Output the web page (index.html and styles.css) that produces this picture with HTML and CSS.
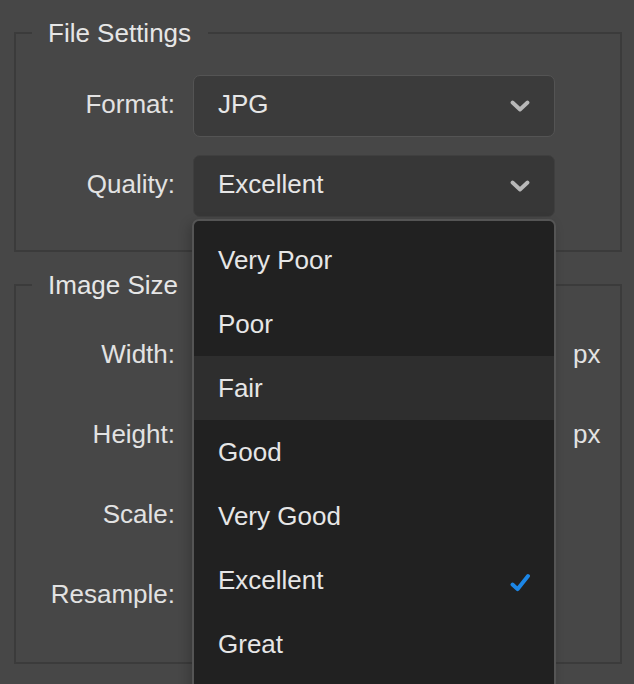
FILE: index.html
```html
<!DOCTYPE html>
<html>
<head>
<meta charset="utf-8">
<link rel="stylesheet" href="styles.css">
</head>
<body>
<div class="panel">
  <fieldset class="group">
    <legend class="legend">File Settings</legend>
    <div class="row">
      <span class="label">Format:</span>
      <div class="select">
        <span class="value">JPG</span>
        <svg class="chev" width="20" height="12" viewBox="0 0 20 12"><path d="M2.5 2.5 L10 9.5 L17.5 2.5" fill="none" stroke="#b8b8b8" stroke-width="3.8" stroke-linecap="round" stroke-linejoin="round"/></svg>
      </div>
    </div>
    <div class="row">
      <span class="label">Quality:</span>
      <div class="select open">
        <span class="value">Excellent</span>
        <svg class="chev" width="20" height="12" viewBox="0 0 20 12"><path d="M2.5 2.5 L10 9.5 L17.5 2.5" fill="none" stroke="#b8b8b8" stroke-width="3.8" stroke-linecap="round" stroke-linejoin="round"/></svg>
      </div>
    </div>
  </fieldset>

  <fieldset class="group second">
    <legend class="legend">Image Size</legend>
    <div class="row">
      <span class="label">Width:</span>
      <div class="input"></div>
      <span class="unit">px</span>
    </div>
    <div class="row">
      <span class="label">Height:</span>
      <div class="input"></div>
      <span class="unit">px</span>
    </div>
    <div class="row">
      <span class="label">Scale:</span>
      <div class="input"></div>
    </div>
    <div class="row">
      <span class="label">Resample:</span>
      <div class="input"></div>
    </div>
  </fieldset>

  <ul class="menu">
    <li class="item">Very Poor</li>
    <li class="item">Poor</li>
    <li class="item hover">Fair</li>
    <li class="item">Good</li>
    <li class="item">Very Good</li>
    <li class="item">Excellent
      <svg class="check" width="20" height="20" viewBox="0 0 20 20"><path d="M2.5 12.5 L7.5 17.2 L18 4" fill="none" stroke="#1c86e6" stroke-width="3.9" stroke-linecap="round" stroke-linejoin="round"/></svg>
    </li>
    <li class="item">Great</li>
  </ul>
</div>
</body>
</html>
```

FILE: styles.css
```css
html, body {
  margin: 0;
  padding: 0;
  background: #474747;
  overflow: hidden;
}
body {
  font-family: "Liberation Sans", Arial, sans-serif;
  font-size: 26px;
  color: #e4e4e4;
}
.panel {
  position: relative;
  width: 634px;
  height: 684px;
  box-sizing: border-box;
  padding: 18px 12px 0 14px;
  display: flex;
  flex-direction: column;
  gap: 18px;
}
.group {
  margin: 0;
  border: 2px solid #3b3b3b;
  padding: 27px 16px 33px 16px;
  display: flex;
  flex-direction: column;
  gap: 18px;
  min-width: 0;
}
.group.second {
  padding-top: 25px;
  padding-bottom: 35px;
}
.legend {
  padding: 0 17px 0 16px;
  line-height: 30px;
  height: 30px;
  color: #e6e6e6;
}
.row {
  display: grid;
  grid-template-columns: 143px 362px auto;
  column-gap: 18px;
  align-items: center;
  height: 62px;
}
.label {
  text-align: right;
  color: #e2e2e2;
  padding-bottom: 4px;
}
.select {
  height: 62px;
  box-sizing: border-box;
  border: 1px solid #545454;
  border-radius: 7px;
  background: #3b3b3b;
  display: flex;
  align-items: center;
  justify-content: space-between;
  padding: 0 24px 0 24px;
}
.select.open {
  background: #373737;
  border-color: #3f3f3f;
}
.value {
  color: #e6e6e6;
  padding-bottom: 4px;
}
.input {
  height: 62px;
  box-sizing: border-box;
  border: 1px solid #545454;
  border-radius: 7px;
  background: #3b3b3b;
}
.unit {
  color: #e2e2e2;
  padding-bottom: 4px;
}
.menu {
  position: absolute;
  left: 192px;
  top: 219px;
  width: 364px;
  height: 480px;
  box-sizing: border-box;
  margin: 0;
  padding: 7px 0;
  list-style: none;
  background: #212121;
  border: 2px solid #555555;
  border-radius: 7px;
  box-shadow: -3px 4px 12px rgba(0, 0, 0, 0.2);
}
.item {
  height: 64px;
  box-sizing: border-box;
  display: flex;
  align-items: center;
  justify-content: space-between;
  padding: 0 24px;
  color: #e6e6e6;
}
.item.hover {
  background: #2e2e2e;
}
.check {
  display: block;
  margin-top: 4px;
}
```
